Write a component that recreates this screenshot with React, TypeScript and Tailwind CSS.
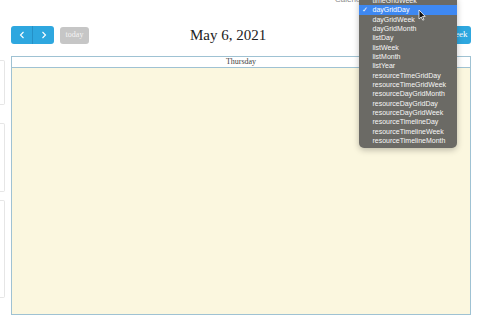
import React from 'react';

const views = [
  'timeGridWeek',
  'dayGridDay',
  'dayGridWeek',
  'dayGridMonth',
  'listDay',
  'listWeek',
  'listMonth',
  'listYear',
  'resourceTimeGridDay',
  'resourceTimeGridWeek',
  'resourceDayGridMonth',
  'resourceDayGridDay',
  'resourceDayGridWeek',
  'resourceTimelineDay',
  'resourceTimelineWeek',
  'resourceTimelineMonth',
];

const Chevron: React.FC<{ dir: 'left' | 'right' }> = ({ dir }) => (
  <svg width="6" height="8" viewBox="0 0 6 8" fill="none">
    <path
      d={dir === 'left' ? 'M4.5 1 L1.5 4 L4.5 7' : 'M1.5 1 L4.5 4 L1.5 7'}
      stroke="white"
      strokeWidth="1.1"
    />
  </svg>
);

const ViewMenu: React.FC = () => (
  <div className="absolute left-[359px] top-[-4px] w-[98px] pb-[2.4px] rounded-[5px] bg-[#6b6a65] shadow-[0_2px_6px_rgba(0,0,0,0.25)] font-['Liberation_Sans',Arial,sans-serif] text-[7px] text-[#f7f7f7]">
    {views.map((v) => {
      const active = v === 'dayGridDay';
      return (
        <div
          key={v}
          className={`relative h-[9.33px] leading-[9.33px] pl-[13.5px] whitespace-nowrap ${active ? 'bg-[#3e88f2] text-white' : ''}`}
        >
          {active && <span className="absolute left-[3px] top-0 text-[7px]">✓</span>}
          {v}
        </div>
      );
    })}
    <svg className="absolute left-[59px] top-[13px]" width="8" height="12" viewBox="0 0 8 12">
      <path d="M1 1 L1 10 L3.2 8 L4.8 11.2 L6 10.6 L4.5 7.5 L7.2 7.4 Z" fill="#111" stroke="white" strokeWidth="0.8" />
    </svg>
  </div>
);

const App: React.FC = () => {
  return (
    <div className="relative w-[480px] h-[320px] overflow-hidden bg-white flex">
      <div className="w-[5px] flex flex-col">
        <div className="mt-[60px] h-[45px] border border-l-0 border-[#e6e6e6] rounded-r-[2px]" />
        <div className="mt-[18px] h-[69px] border border-l-0 border-[#e6e6e6] rounded-r-[2px]" />
        <div className="mt-[8px] h-[98px] border border-l-0 border-[#e6e6e6] rounded-r-[2px]" />
      </div>

      <div className="flex-1 pl-[6px] pr-[9px] flex flex-col">
        <div className="h-0 relative">
          <span className="absolute left-[324px] top-[-6px] text-[8px] text-[#8a8a8a] font-['Liberation_Sans',Arial,sans-serif]">
            Calendar
          </span>
        </div>

        <div className="mt-[26px] h-[18px] flex items-center font-['Liberation_Serif',Georgia,serif]">
          <div className="flex h-full">
            <button className="w-[22px] h-full flex items-center justify-center bg-[#2ea7df] rounded-l-[3px] border-r border-[#2590c6]">
              <Chevron dir="left" />
            </button>
            <button className="w-[21px] h-full flex items-center justify-center bg-[#2ea7df] rounded-r-[3px]">
              <Chevron dir="right" />
            </button>
          </div>
          <button className="ml-[6px] w-[29px] h-[17px] rounded-[3px] bg-[#c6c6c6] text-[8px] text-[#f4f4f4]">
            today
          </button>
          <h2 className="ml-[101px] text-[15px] leading-none text-[#222]">May 6, 2021</h2>
          <div className="flex-1" />
          <button className="w-[31px] h-full rounded-[3px] bg-[#2ea7df] text-[9px] text-white pl-[5px]">
            week
          </button>
        </div>

        <div className="mt-[12px] h-[259px] border border-[#9fc2d3] flex flex-col">
          <div className="h-[11px] border-b border-[#9fc2d3] bg-white flex items-center justify-center font-['Liberation_Serif',Georgia,serif] text-[8px] text-[#444]">
            Thursday
          </div>
          <div className="flex-1 bg-[#fbf7df]" />
        </div>
      </div>

      <ViewMenu />
    </div>
  );
};

export default App;
